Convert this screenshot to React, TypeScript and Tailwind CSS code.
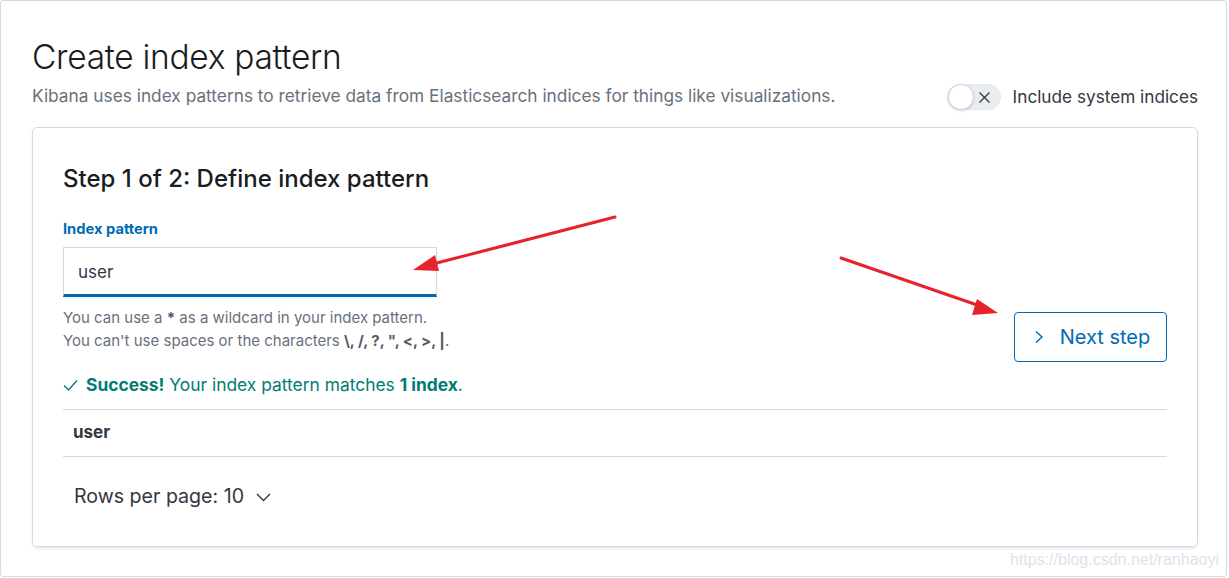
import React from "react";

const font = { fontFamily: "Inter, 'Noto Sans', sans-serif" };

function Toggle() {
  return (
    <div className="relative w-[54px] h-[26px] rounded-full bg-[#e9edf2] border border-[#e3e8ef]">
      <div className="absolute left-0 top-[-1px] w-[26px] h-[26px] rounded-full bg-white border border-[#cfd6e0] shadow-sm" />
      <svg
        className="absolute right-[9px] top-[6px]"
        width="13"
        height="13"
        viewBox="0 0 13 13"
        fill="none"
        stroke="#343741"
        strokeWidth="1.3"
      >
        <path d="M1.5 1.5l10 10M11.5 1.5l-10 10" />
      </svg>
    </div>
  );
}

export default function App() {
  return (
    <div
      className="relative w-[1227px] h-[577px] border border-[#d3dae6] rounded-[3px] bg-white text-[#343741]"
      style={font}
    >
      {/* Page header */}
      <div className="pl-[31px] pr-[28px] pt-[34px] flex justify-between items-end">
        <div>
          <h1 className="text-[33.5px] leading-[44px] font-light text-[#1a1c21] tracking-[-0.3px]">
            Create index pattern
          </h1>
          <p className="mt-[6px] text-[17.3px] leading-[22px] text-[#69707d]">
            Kibana uses index patterns to retrieve data from Elasticsearch
            indices for things like visualizations.
          </p>
        </div>
        <div className="flex items-center gap-[12px] mb-[-3px]">
          <Toggle />
          <span className="text-[17.2px] leading-[22px] text-[#343741]">
            Include system indices
          </span>
        </div>
      </div>

      {/* Panel */}
      <div className="mx-[31px] mt-[20px] w-[1166px] h-[420px] border border-[#d3dae6] rounded-[5px] shadow-[0_2px_3px_rgba(152,162,179,0.2)] px-[30px] pt-[36px]">
        <h2 className="text-[24px] leading-[30px] font-medium text-[#1a1c21]">
          Step 1 of 2: Define index pattern
        </h2>

        <div className="flex justify-between items-start mt-[26px]">
          <div>
            <label className="block text-[14.7px] leading-[18px] font-bold text-[#006bb4]">
              Index pattern
            </label>
            <div className="mt-[9px] w-[374px] h-[50px] bg-white border border-[#d3dae6] border-b-[3px] border-b-[#006bb4] flex items-center px-[14px] shadow-[0_1px_2px_rgba(0,0,0,0.05)]">
              <span className="text-[17px] text-[#343741] mt-[3px]">user</span>
            </div>
            <div className="mt-[9px] text-[15px] leading-[23px] text-[#69707d]">
              <div>
                You can use a <b className="font-bold text-[#535966]">*</b> as a
                wildcard in your index pattern.
              </div>
              <div>
                You can't use spaces or the characters{" "}
                <b className="font-bold text-[#535966]">
                  \, /, ?, ", &lt;, &gt;, |
                </b>
                .
              </div>
            </div>
          </div>
          <button className="mt-[92px] w-[153px] h-[50px] border border-[#006bb4] rounded-[4px] flex items-center justify-center gap-[15px] text-[#006bb4] text-[20px] pl-[2px]">
            <svg width="12" height="14" viewBox="0 0 12 14" fill="none" stroke="#006bb4" strokeWidth="1.4">
              <path d="M3 1.5l6 5.5-6 5.5" />
            </svg>
            Next step
          </button>
        </div>

        <div className="mt-[12px] flex items-center gap-[8px] text-[17.4px] leading-[22px] text-[#017d73]">
          <svg width="15" height="12" viewBox="0 0 15 12" fill="none" stroke="#017d73" strokeWidth="1.3">
            <path d="M1 6.5l4.5 4.5L14 1.5" />
          </svg>
          <span>
            <b className="font-bold">Success!</b> Your index pattern matches{" "}
            <b className="font-bold">1 index</b>.
          </span>
        </div>

        <div className="mt-[13px] border-t border-b border-[#d3dae6] h-[48px] flex items-center px-[10px]">
          <span className="text-[17px] font-bold text-[#343741]">user</span>
        </div>

        <div className="mt-[25px] pl-[11px] flex items-center gap-[12px] text-[19.6px] text-[#343741]">
          <span>Rows per page: 10</span>
          <svg width="15" height="10" viewBox="0 0 15 10" fill="none" stroke="#343741" strokeWidth="1.4">
            <path d="M1 2l6.5 6.5L14 2" />
          </svg>
        </div>
      </div>

      {/* Annotation arrows */}
      <svg className="absolute left-0 top-0 pointer-events-none" width="1227" height="577">
        <line x1="614" y1="216" x2="428" y2="264" stroke="#e8222a" strokeWidth="3" strokeLinecap="round" />
        <polygon points="412,269 434,254 438,270" fill="#e8222a" />
        <line x1="840" y1="257" x2="982" y2="306" stroke="#e8222a" strokeWidth="3" strokeLinecap="round" />
        <polygon points="997,312 976,298 971,314" fill="#e8222a" />
      </svg>

      {/* Watermark */}
      <div
        className="absolute right-[7px] bottom-[4px] text-[16px] text-[#e0e3e8]"
        style={{ fontFamily: "'Liberation Sans', Arial, sans-serif" }}
      >
        https://blog.csdn.net/ranhaoyi
      </div>
    </div>
  );
}
